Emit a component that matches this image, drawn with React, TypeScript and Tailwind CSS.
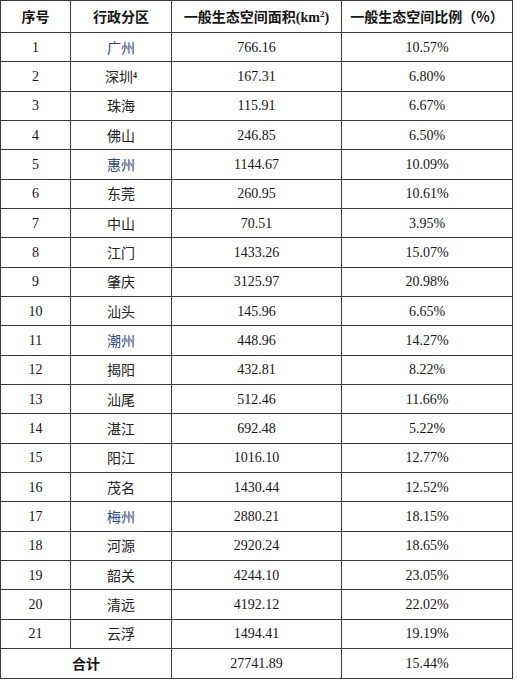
import { Fragment } from "react";

const rows: [string, string, string, boolean?][] = [
  ["广州", "766.16", "10.57%", true],
  ["深圳", "167.31", "6.80%"],
  ["珠海", "115.91", "6.67%"],
  ["佛山", "246.85", "6.50%"],
  ["惠州", "1144.67", "10.09%", true],
  ["东莞", "260.95", "10.61%"],
  ["中山", "70.51", "3.95%"],
  ["江门", "1433.26", "15.07%"],
  ["肇庆", "3125.97", "20.98%"],
  ["汕头", "145.96", "6.65%"],
  ["潮州", "448.96", "14.27%", true],
  ["揭阳", "432.81", "8.22%"],
  ["汕尾", "512.46", "11.66%"],
  ["湛江", "692.48", "5.22%"],
  ["阳江", "1016.10", "12.77%"],
  ["茂名", "1430.44", "12.52%"],
  ["梅州", "2880.21", "18.15%", true],
  ["河源", "2920.24", "18.65%"],
  ["韶关", "4244.10", "23.05%"],
  ["清远", "4192.12", "22.02%"],
  ["云浮", "1494.41", "19.19%"],
];

const serif = "font-['Liberation_Serif','Noto_Sans_CJK_SC',serif]";
const cjk = "font-['Noto_Sans_CJK_SC',sans-serif] font-normal";
const cell = "border border-[#3a3a3a] text-center align-middle p-0";

export default function App() {
  return (
    <div className="bg-white w-[517px] h-[681px] text-[14px] text-[#151515]">
      <table className="table-fixed border-collapse w-[512px]">
        <colgroup>
          <col className="w-[70px]" />
          <col className="w-[101px]" />
          <col className="w-[170px]" />
          <col className="w-[171px]" />
        </colgroup>
        <thead>
          <tr className="h-[32px] font-['Noto_Sans_CJK_SC',sans-serif] font-bold">
            <th className={cell}>序号</th>
            <th className={cell}>行政分区</th>
            <th className={cell}>
              一般生态空间面积
              <span className="font-['Liberation_Serif',serif]">
                (km<sup className="text-[9px]">2</sup>)
              </span>
            </th>
            <th className={cell}>一般生态空间比例（%）</th>
          </tr>
        </thead>
        <tbody>
          {rows.map(([name, area, ratio, blue], i) => (
            <Fragment key={name}>
              <tr className="h-[29.33px]">
                <td className={`${cell} ${serif}`}>{i + 1}</td>
                <td className={`${cell} ${cjk} ${blue ? "text-[#2c4a86]" : "text-[#222]"}`}>
                  {name}
                  {name === "深圳" && (
                    <sup className="font-['Liberation_Serif',serif] text-[8px] font-bold">4</sup>
                  )}
                </td>
                <td className={`${cell} ${serif}`}>{area}</td>
                <td className={`${cell} ${serif}`}>{ratio}</td>
              </tr>
            </Fragment>
          ))}
          <tr className="h-[30px]">
            <td colSpan={2} className={`${cell} font-['Noto_Sans_CJK_SC',sans-serif] font-bold`}>
              合计
            </td>
            <td className={`${cell} ${serif}`}>27741.89</td>
            <td className={`${cell} ${serif}`}>15.44%</td>
          </tr>
        </tbody>
      </table>
    </div>
  );
}
